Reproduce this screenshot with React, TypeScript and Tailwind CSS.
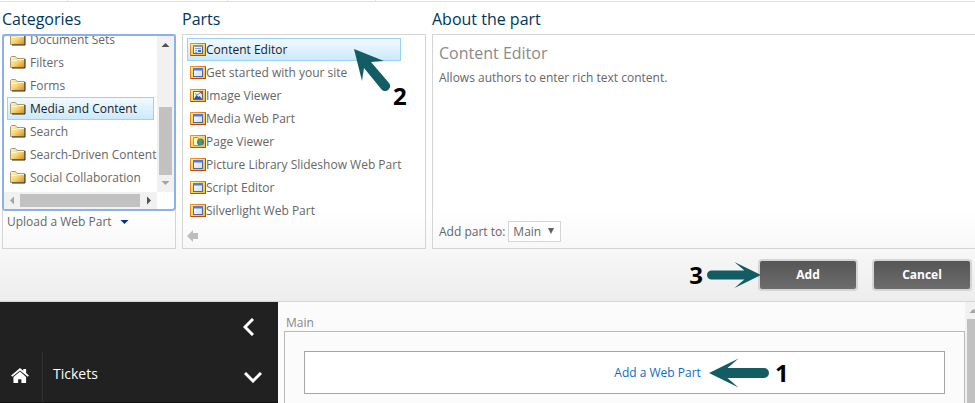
import React from "react";

type PartKind = "editor" | "window" | "image" | "page";

const categories = [
  "Document Sets",
  "Filters",
  "Forms",
  "Media and Content",
  "Search",
  "Search-Driven Content",
  "Social Collaboration",
];

const parts: { name: string; kind: PartKind }[] = [
  { name: "Content Editor", kind: "editor" },
  { name: "Get started with your site", kind: "window" },
  { name: "Image Viewer", kind: "image" },
  { name: "Media Web Part", kind: "window" },
  { name: "Page Viewer", kind: "page" },
  { name: "Picture Library Slideshow Web Part", kind: "window" },
  { name: "Script Editor", kind: "window" },
  { name: "Silverlight Web Part", kind: "window" },
];

function Gradients() {
  return (
    <svg width="0" height="0" className="absolute" aria-hidden="true">
      <defs>
        <linearGradient id="folder" x1="0" y1="0" x2="1" y2="1">
          <stop offset="0" stopColor="#fff3c4" />
          <stop offset="0.5" stopColor="#f8d673" />
          <stop offset="1" stopColor="#d98a10" />
        </linearGradient>
        <linearGradient id="frame" x1="0" y1="0" x2="1" y2="1">
          <stop offset="0" stopColor="#fff0a0" />
          <stop offset="1" stopColor="#fbb62c" />
        </linearGradient>
        <linearGradient id="edge" x1="0" y1="0" x2="1" y2="1">
          <stop offset="0" stopColor="#f39a28" />
          <stop offset="1" stopColor="#c8500c" />
        </linearGradient>
        <linearGradient id="pane" x1="0" y1="0" x2="1" y2="1">
          <stop offset="0" stopColor="#ffffff" />
          <stop offset="1" stopColor="#c9dcf8" />
        </linearGradient>
      </defs>
    </svg>
  );
}

function Folder() {
  return (
    <svg width="16" height="13" viewBox="0 0 16 13" className="shrink-0" aria-hidden="true">
      <path d="M.5 11.5V1.5L1.5.5h4l1.5 2h7.5v9z" fill="url(#folder)" stroke="#aa9b77" />
      <path d="M1.5 4.5h5l1-1h6.5" stroke="#fff9e2" fill="none" />
      <path d="M2 12h13V3" stroke="#2e240d" fill="none" />
    </svg>
  );
}

function PartIcon({ kind }: { kind: PartKind }) {
  return (
    <svg width="16" height="13" viewBox="0 0 16 13" className="shrink-0" aria-hidden="true">
      <rect x=".5" y=".5" width="15" height="12" fill="url(#frame)" stroke="url(#edge)" />
      <path d="M1 12.5h14.5V1" stroke="#c8440c" fill="none" />
      {kind !== "page" && <rect x="3.5" y="2.5" width="9" height="8" fill="url(#pane)" stroke="#56698f" />}
      {kind === "window" && <path d="M3 2h10v2.500H3z" fill="#4f7bd8" />}
      {kind === "editor" && (
        <>
          <path d="M3 2h10v2H3z" fill="#7895cf" />
          <path d="M5 5.500h6M5 7.500h2M5 9.500h2" stroke="#8d9dbf" />
          <path d="M8 7h3v2H8z" fill="#3766d0" />
        </>
      )}
      {kind === "image" && (
        <>
          <path d="M4 10l2.500-4 2 2 1-1L12 10z" fill="#2d4f97" />
          <path d="M5 4.500l2 1.500 3-2" stroke="#7f8aa3" fill="none" />
          <path d="M9.500 3H12v2.500z" fill="#d23b22" />
        </>
      )}
      {kind === "page" && (
        <>
          <path d="M3.500 2.500h4l2 2v6h-6z" fill="#fff4c0" stroke="#e08a0c" />
          <circle cx="10.500" cy="7" r="3.500" fill="#3b78c4" />
          <path d="M8 6l2-2 2 1-1 2 1 1-2 2-1-2z" fill="#4ca832" />
        </>
      )}
    </svg>
  );
}

function Arrow({ className }: { className: string }) {
  return (
    <svg width="60" height="30" viewBox="0 0 60 30" className={className} aria-hidden="true">
      <path d="M0 15L29.500 0.500 18.500 10H55a5 5 0 0 1 0 10H18.500L29.500 29.500z" fill="#125d64" />
    </svg>
  );
}

function Triangle({ d, fill }: { d: string; fill: string }) {
  return (
    <svg width="9" height="9" viewBox="0 0 9 9" className="shrink-0" aria-hidden="true">
      <path d={d} fill={fill} />
    </svg>
  );
}

const UP = "M0.500 7h8L4.500 3z";
const DOWN = "M0.500 2h8L4.500 6z";
const LEFT = "M6 0.500v8L2 4.500z";
const RIGHT = "M3 0.500v8L7 4.500z";

function Heading({ children }: { children: React.ReactNode }) {
  return <h2 className="h-8 pt-1 text-base leading-[26px] text-[#003759]">{children}</h2>;
}

function Categories() {
  return (
    <section className="flex w-[174px] shrink-0 flex-col">
      <Heading>Categories</Heading>
      <div className="flex grow flex-col border border-[#d5d5d5]">
        <div className="-mx-px -mt-px flex h-[177px] flex-col rounded-sm border-2 border-[#8caff0] bg-white">
          <div className="flex min-h-0 grow">
            <ul className="flex min-w-0 grow flex-col justify-end overflow-hidden pb-[3px] pl-[3px]">
              {categories.map((name) => (
                <li key={name} className="shrink-0">
                  <button
                    type="button"
                    className={
                      name === "Media and Content"
                        ? "flex h-[23px] w-[147px] items-center gap-1 border border-[#9ad1f5] bg-gradient-to-b from-[#f2faff] to-[#cbe9fd] px-0.5 text-[#1b2126]"
                        : "flex h-[23px] items-center gap-1 border border-transparent px-0.5"
                    }
                  >
                    <Folder />
                    <span className="whitespace-nowrap">{name}</span>
                  </button>
                </li>
              ))}
            </ul>
            <div className="flex w-[17px] shrink-0 flex-col items-center bg-[#f1f1f1] py-1">
              <Triangle d={UP} fill="#505050" />
              <div className="mt-auto mb-1 h-[68px] w-[13px] bg-[#c1c1c1]" />
              <Triangle d={DOWN} fill="#a3a3a3" />
            </div>
          </div>
          <div className="mr-[17px] flex h-[17px] shrink-0 items-center bg-[#f1f1f1] px-1">
            <Triangle d={LEFT} fill="#a3a3a3" />
            <div className="mr-1 ml-[3px] h-[13px] grow bg-[#c1c1c1]" />
            <Triangle d={RIGHT} fill="#505050" />
          </div>
        </div>
        <button type="button" className="flex items-center gap-2 pt-[3px] pl-1 leading-4">
          Upload a Web Part
          <Triangle d={DOWN} fill="#00309c" />
        </button>
      </div>
    </section>
  );
}

function Parts() {
  return (
    <section className="flex w-[244px] shrink-0 flex-col">
      <Heading>Parts</Heading>
      <div className="relative flex grow flex-col border border-[#d5d5d5] pt-[3px] pl-1">
        <ul className="w-[218px] overflow-hidden">
          {parts.map(({ name, kind }) => (
            <li key={name}>
              <button
                type="button"
                className={
                  kind === "editor"
                    ? "flex h-[23px] w-[214px] items-center border border-[#9ad1f5] bg-gradient-to-b from-[#f2faff] to-[#cbe9fd] px-0.5 text-[#1b2126]"
                    : "flex h-[23px] items-center border border-transparent px-0.5"
                }
              >
                <PartIcon kind={kind} />
                <span className="whitespace-nowrap">{name}</span>
              </button>
            </li>
          ))}
        </ul>
        <button type="button" aria-label="Previous" className="mt-2 w-3">
          <svg width="12" height="12" viewBox="0 0 12 12" aria-hidden="true">
            <path d="M0 6l6-6v3h5v6H6v3z" fill="#bdbdbd" />
          </svg>
        </button>
        <svg width="38" height="42" viewBox="0 0 38 42" className="absolute top-3.5 left-[170px]" aria-hidden="true">
          <path d="M1 0L31 12 18 13 36 34a5 5 0 0 1-7 7L11 19 9 32z" fill="#125d64" />
        </svg>
        <b className="absolute top-[47px] left-[210px] text-2xl leading-7 text-black">2</b>
      </div>
    </section>
  );
}

function About() {
  return (
    <section className="flex min-w-0 grow flex-col">
      <Heading>About the part</Heading>
      <div className="flex grow flex-col border border-r-0 border-[#d5d5d5] px-1.5 pt-1.5 pb-1.5">
        <h3 className="text-base leading-6 text-[#8a8a8a]">Content Editor</h3>
        <p className="mt-1 leading-[18px]">Allows authors to enter rich text content.</p>
        <div className="mt-auto flex items-center">
          <label htmlFor="zone">Add part to:</label>
          <div className="relative ml-[3px]">
            <select id="zone" className="h-[21px] w-[53px] appearance-none border border-[#d5d5d5] bg-white pl-1">
              <option>Main</option>
            </select>
            <svg width="6" height="6" viewBox="0 0 6 6" className="pointer-events-none absolute top-[7px] right-[7px]" aria-hidden="true">
              <path d="M0 0h6L3 6z" fill="#606060" />
            </svg>
          </div>
        </div>
      </div>
    </section>
  );
}

const actionButton =
  "h-8 w-[100px] rounded border-2 border-[#d5d5d5] bg-gradient-to-b from-[#565656] to-[#6d6d6d] font-bold text-white";

function Picker() {
  return (
    <div className="border-b border-[#d5d5d5] bg-[linear-gradient(#fff_70%,#ededed)]">
      <div className="flex h-0.5 items-end border-b border-[#e1e1e1]">
        <i className="ml-[67px] h-px w-px bg-[#e1e1e1]" />
        <i className="ml-[159px] h-px w-px bg-[#e1e1e1]" />
        <i className="ml-[147px] h-px w-px bg-[#e1e1e1]" />
      </div>
      <div className="flex h-[247px] gap-1.5 pl-0.5">
        <Categories />
        <Parts />
        <About />
      </div>
      <div className="flex items-center justify-end pt-2.5 pr-[3px] pb-2.5">
        <b className="mr-1 text-2xl leading-8 text-black">3</b>
        <Arrow className="z-10 -mr-[3px] w-[54px] rotate-180" />
        <button type="button" className={actionButton}>Add</button>
        <button type="button" className={actionButton + " ml-3.5"}>Cancel</button>
      </div>
    </div>
  );
}

function Sidebar() {
  return (
    <nav className="flex w-[278px] shrink-0 flex-col bg-[#212121] text-white">
      <div className="flex h-[50px] items-center justify-end pr-6">
        <button type="button" aria-label="Collapse">
          <svg width="11" height="18" viewBox="0 0 11 18" aria-hidden="true">
            <path d="M10 1L2 9l8 8" fill="none" stroke="#fff" strokeWidth="3" />
          </svg>
        </button>
      </div>
      <div className="flex h-[51px] items-center border-b border-[#111]">
        <a href="#home" aria-label="Home" className="flex h-full w-[43px] items-center border-r border-[#303030] pb-1 pl-[11px]">
          <svg width="18" height="15" viewBox="0 0 19 16" fill="#fff" aria-hidden="true">
            <path d="M9.500 0L0 8l1.200 1.400 8.300-6.700 8.300 6.700L19 8l-3-2.600V1h-3v2z" />
            <path d="M9.500 3.800L2.500 9.500V16h5v-4h3.500v4H16V9.500z" />
          </svg>
        </a>
        <a href="#tickets" className="grow pb-1.5 pl-2.5 text-sm">Tickets</a>
        <button type="button" aria-label="Expand" className="mr-4">
          <svg width="18" height="11" viewBox="0 0 18 11" aria-hidden="true">
            <path d="M1 1l8 8 8-8" fill="none" stroke="#fff" strokeWidth="3" />
          </svg>
        </button>
      </div>
    </nav>
  );
}

function Page() {
  return (
    <main className="flex min-w-0 grow bg-[#fbfbfb]">
      <div className="flex min-w-0 grow flex-col pt-3 pl-1.5">
        <h2 className="pl-0.5 leading-[17px] text-[#888]">Main</h2>
        <div className="grow border border-b-0 border-[#b9b9b9] px-[19px] pt-[19px]">
          <div className="flex h-[43px] items-center justify-center border border-[#a6a6a6] bg-white pl-[154px]">
            <a href="#add" className="text-[#0f6cbf]">Add a Web Part</a>
            <Arrow className="ml-2" />
            <b className="ml-1.5 text-2xl leading-8 text-black">1</b>
          </div>
        </div>
      </div>
      <div className="flex w-2.5 shrink-0 flex-col overflow-hidden bg-[#f1f1f1] pl-0.5">
        <div className="my-1 ml-0.5">
          <Triangle d={UP} fill="#a3a3a3" />
        </div>
        <div className="w-[13px] grow bg-[#c1c1c1]" />
      </div>
    </main>
  );
}

export default function App() {
  return (
    <div className="overflow-hidden bg-[#fbfbfb] font-['Open_Sans','Noto_Sans',sans-serif] text-xs text-[#666]">
      <Gradients />
      <Picker />
      <div className="flex">
        <Sidebar />
        <Page />
      </div>
    </div>
  );
}
